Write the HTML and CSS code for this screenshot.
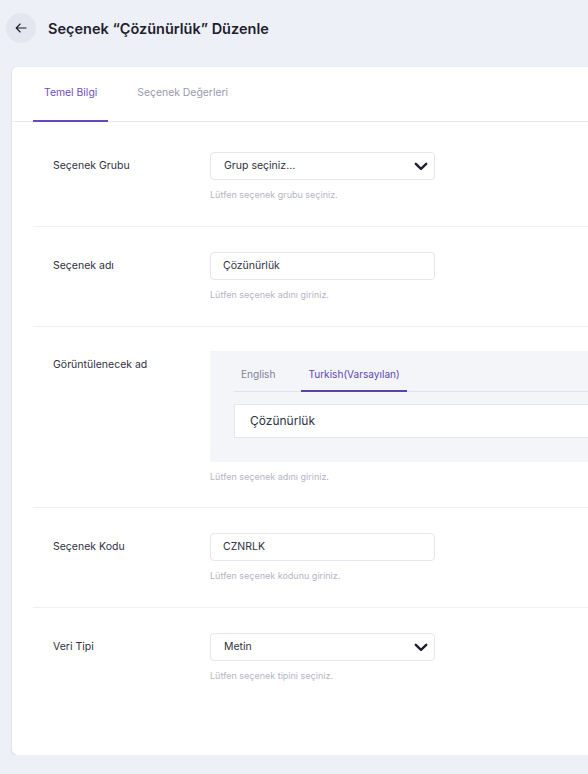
FILE: index.html
```html
<!DOCTYPE html>
<html lang="tr">
<head>
<meta charset="utf-8">
<title>Seçenek Düzenle</title>
<link rel="stylesheet" href="styles.css">
</head>
<body>
<div class="page">
  <header class="header">
    <button class="back" aria-label="Geri">
      <svg width="12" height="12" viewBox="0 0 12 12" fill="none" stroke="#1e1e2d" stroke-width="1.1" stroke-linecap="round" stroke-linejoin="round"><path d="M11 6H1.2M5.2 2 1.2 6l4 4"/></svg>
    </button>
    <h1 class="title">Seçenek “Çözünürlük” Düzenle</h1>
  </header>

  <section class="card">
    <nav class="tabs">
      <span class="tab active">Temel Bilgi</span>
      <span class="tab">Seçenek Değerleri</span>
    </nav>
    <div class="content">
      <div class="row">
        <label class="label">Seçenek Grubu</label>
        <div class="field">
          <div class="control select"><span>Grup seçiniz...</span>
            <svg class="chev" width="14" height="9" viewBox="0 0 14 9" fill="none" stroke="#1e1e2d" stroke-width="2.4" stroke-linecap="round" stroke-linejoin="round"><path d="M1.8 1.8 7 6.8l5.2-5"/></svg>
          </div>
          <div class="help">Lütfen seçenek grubu seçiniz.</div>
        </div>
      </div>
      <div class="row">
        <label class="label">Seçenek adı</label>
        <div class="field">
          <div class="control">Çözünürlük</div>
          <div class="help">Lütfen seçenek adını giriniz.</div>
        </div>
      </div>
      <div class="row lang">
        <label class="label">Görüntülenecek ad</label>
        <div class="field">
          <div class="langbox">
            <nav class="langtabs">
              <span class="ltab">English</span>
              <span class="ltab active">Turkish(Varsayılan)</span>
            </nav>
            <div class="biginput">Çözünürlük</div>
          </div>
          <div class="help">Lütfen seçenek adını giriniz.</div>
        </div>
      </div>
      <div class="row">
        <label class="label">Seçenek Kodu</label>
        <div class="field">
          <div class="control">CZNRLK</div>
          <div class="help">Lütfen seçenek kodunu giriniz.</div>
        </div>
      </div>
      <div class="row last">
        <label class="label">Veri Tipi</label>
        <div class="field">
          <div class="control select"><span>Metin</span>
            <svg class="chev" width="14" height="9" viewBox="0 0 14 9" fill="none" stroke="#1e1e2d" stroke-width="2.4" stroke-linecap="round" stroke-linejoin="round"><path d="M1.8 1.8 7 6.8l5.2-5"/></svg>
          </div>
          <div class="help">Lütfen seçenek tipini seçiniz.</div>
        </div>
      </div>
    </div>
  </section>
</div>
</body>
</html>
```

FILE: styles.css
```css
html, body {
  margin: 0;
  padding: 0;
  overflow: hidden;
  background: #eef0f8;
  font-family: Inter, "Noto Sans", "DejaVu Sans", sans-serif;
  color: #3f4254;
}

.page {
  width: 660px;
  padding: 0 0 0 6px;
}

.header {
  display: flex;
  align-items: center;
  height: 30px;
  padding-top: 13px;
  padding-bottom: 24px;
}

.back {
  width: 30px;
  height: 30px;
  border-radius: 50%;
  border: none;
  background: #e3e5ef;
  display: flex;
  align-items: center;
  justify-content: center;
  padding: 0;
}

.title {
  margin: 0 0 0 12px;
  font-size: 14.5px;
  font-weight: 600;
  color: #1e1e2d;
}

.card {
  margin-left: 6px;
  width: 640px;
  background: #fff;
  border-radius: 5px;
  box-shadow: 0 0 1px rgba(0,0,0,0.12), 0 1px 2px rgba(0,0,0,0.14);
  padding-bottom: 48px;
}

.tabs {
  display: flex;
  gap: 18px;
  padding: 0 21px;
  border-bottom: 1px solid #e9e9f1;
}

.tab {
  font-size: 10.4px;
  line-height: 16px;
  padding: 18px 11px 19px;
  color: #9899ad;
  border-bottom: 2px solid transparent;
  margin-bottom: -1px;
}

.tab.active {
  color: #6d4ec0;
  border-bottom-color: #6a46bf;
}

.content {
  padding: 5px 0 0 21px;
}

.row {
  display: flex;
  padding: 25px 0 25px 20px;
  border-bottom: 1px solid #eff0f5;
}

.row.lang {
  padding-top: 24px;
  padding-bottom: 24px;
}

.row.last {
  border-bottom: none;
}

.label {
  width: 157px;
  flex: none;
  font-size: 10.5px;
  line-height: 28px;
  color: #2f3142;
}

.field {
  flex: 1;
  min-width: 0;
}

.control {
  width: 225px;
  height: 28px;
  box-sizing: border-box;
  border: 1px solid #e4e6ef;
  border-radius: 4px;
  padding: 0 12px;
  font-size: 10.5px;
  line-height: 26px;
  color: #2f3142;
}

.select {
  display: flex;
  align-items: center;
  justify-content: space-between;
  padding-left: 13px;
  padding-right: 6px;
}

.chev {
  display: block;
}

.help {
  margin-top: 9px;
  font-size: 9px;
  line-height: 12px;
  color: #b5b5c3;
}

.langbox {
  background: #f3f5f9;
  padding: 0 0 24px 24px;
}

.langtabs {
  display: flex;
  gap: 19px;
  border-bottom: 1px solid #e1e3ea;
}

.ltab {
  font-size: 10.1px;
  line-height: 16px;
  padding: 15px 7px 8px;
  color: #7e8299;
  border-bottom: 2px solid transparent;
  margin-bottom: -1px;
}

.ltab.active {
  color: #6447b3;
  border-bottom-color: #5b43a6;
}

.biginput {
  margin-top: 12px;
  height: 34px;
  box-sizing: border-box;
  background: #fff;
  border: 1px solid #e4e6ef;
  padding: 0 15px;
  font-size: 12px;
  line-height: 32px;
  color: #2f3142;
}
```
